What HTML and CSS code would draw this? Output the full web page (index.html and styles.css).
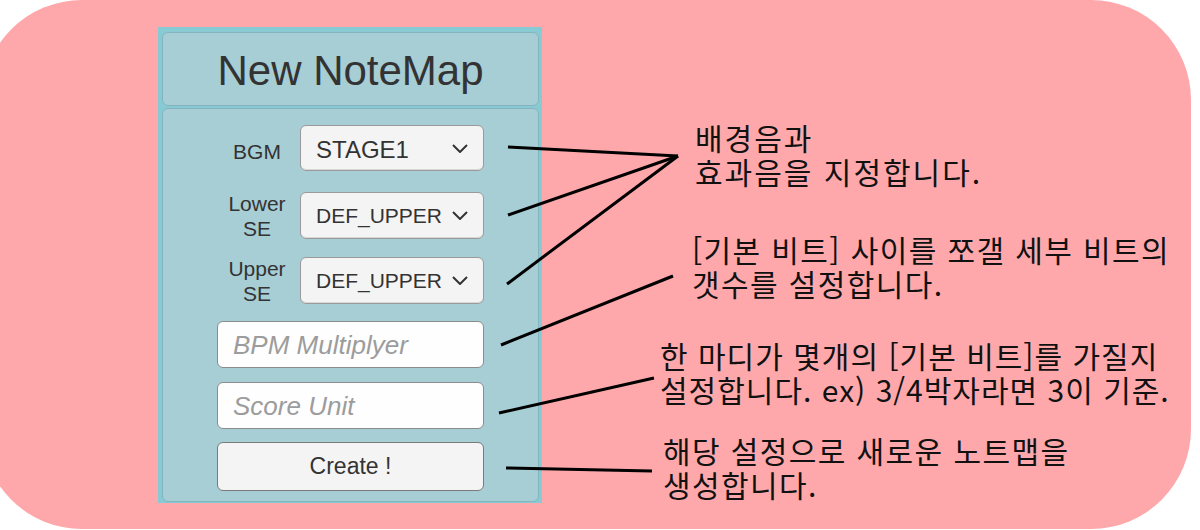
FILE: index.html
```html
<!DOCTYPE html>
<html lang="ko">
<head>
<meta charset="UTF-8" />
<title>New NoteMap</title>
<link rel="stylesheet" href="styles.css">
</head>
<body>
<div class="board">
  <div class="panel">
    <div class="head">New NoteMap</div>
    <div class="form">
      <div class="row">
        <span class="label low">BGM</span>
        <div class="select big">STAGE1<svg class="chev" width="16" height="9" viewBox="0 0 16 9"><polyline points="1,1 8,8 15,1" /></svg></div>
      </div>
      <div class="row r2">
        <span class="label">Lower<br />SE</span>
        <div class="select">DEF_UPPER<svg class="chev" width="16" height="9" viewBox="0 0 16 9"><polyline points="1,1 8,8 15,1" /></svg></div>
      </div>
      <div class="row r3">
        <span class="label">Upper<br />SE</span>
        <div class="select">DEF_UPPER<svg class="chev" width="16" height="9" viewBox="0 0 16 9"><polyline points="1,1 8,8 15,1" /></svg></div>
      </div>
      <input class="field f1" type="text" placeholder="BPM Multiplyer" />
      <input class="field f2" type="text" placeholder="Score Unit" />
      <button class="create">Create !</button>
    </div>
  </div>

  <div class="notes">
    <p class="note n1">배경음과<br />효과음을 지정합니다.</p>
    <p class="note n2">[기본 비트] 사이를 쪼갤 세부 비트의<br />갯수를 설정합니다.</p>
    <p class="note n3">한 마디가 몇개의 [기본 비트]를 가질지<br />설정합니다. ex) 3/4박자라면 3이 기준.</p>
    <p class="note n4">해당 설정으로 새로운 노트맵을<br />생성합니다.</p>
  </div>
</div>

<!-- connector lines -->
<svg class="links" width="1200" height="530" viewBox="0 0 1200 530">
  <line x1="508" y1="147" x2="678" y2="156" />
  <line x1="508" y1="215" x2="678" y2="156" />
  <line x1="507" y1="284" x2="678" y2="156" />
  <line x1="501" y1="345" x2="673" y2="276" />
  <line x1="499" y1="413" x2="654" y2="378" />
  <line x1="506" y1="468" x2="652" y2="471" />
</svg>
</body>
</html>
```

FILE: styles.css
```css
body {
  margin: 0;
  width: 1200px;
  height: 530px;
  overflow: hidden;
  position: relative;
  background: #fff;
  font-family: "Liberation Sans", Arial, sans-serif;
  color: #333;
}

.board {
  margin-left: -18px;
  width: 1209px;
  height: 529px;
  box-sizing: border-box;
  padding: 27px 0 0 176px;
  background: #fea8ab;
  border-radius: 100px;
  display: flex;
  align-items: flex-start;
}

/* the unity-like window */
.panel {
  width: 384px;
  height: 476px;
  box-sizing: border-box;
  padding: 5px 3px 1px 4px;
  background: #88cad4;
  display: flex;
  flex-direction: column;
  gap: 2px;
}

.head,
.form {
  background: #a7cdd5;
  border: 1px solid #86b4be;
  border-radius: 6px;
  box-sizing: border-box;
}

.head {
  height: 74px;
  display: flex;
  align-items: center;
  justify-content: center;
  font-size: 42px;
  padding-top: 3px;
}

.form {
  flex: 1;
  display: flex;
  flex-direction: column;
  padding: 16px 0 0 54px;
}

.row {
  display: flex;
  align-items: center;
  height: 46px;
}

.row.r2 { margin-top: 21px; height: 47px; }
.row.r3 { margin-top: 18px; height: 47px; }

.label {
  width: 80px;
  margin-right: 3px;
  text-align: center;
  font-size: 21px;
  line-height: 25px;
}

.label.low {
  padding-top: 6px;
}

.select {
  width: 184px;
  height: 100%;
  box-sizing: border-box;
  display: flex;
  align-items: center;
  padding: 0 15px 0 15px;
  background: #f4f4f4;
  border: 1px solid #9a9a9a;
  border-radius: 6px;
  box-shadow: inset 0 -1px 0 #d8d8d8;
  font-size: 21px;
}

.select.big {
  font-size: 24px;
  padding-top: 3px;
}

.chev {
  margin-left: auto;
  fill: none;
  stroke: #333;
  stroke-width: 2;
}

.select.big .chev {
  margin-top: -3px;
}

.field,
.create {
  width: 267px;
  height: 47px;
  box-sizing: border-box;
  border: 1px solid #8c8c8c;
  border-radius: 6px;
  font-family: "Liberation Sans", Arial, sans-serif;
}

.field {
  background: #fefefe;
  padding: 2px 0 0 15px;
  font-size: 26px;
  font-style: italic;
  color: #333;
}

.field::placeholder {
  color: #9c9c9c;
}

.field.f1 { margin-top: 17px; }
.field.f2 { margin-top: 14px; }

.create {
  margin-top: 13px;
  height: 49px;
  background: #f4f4f4;
  border-color: #7a7a7a;
  font-size: 23px;
  color: #333;
  padding: 0;
}

/* callout texts */
.notes {
  margin-left: 118px;
  padding-top: 93px;
  display: flex;
  flex-direction: column;
}

.note {
  margin: 0;
  white-space: nowrap;
  font-family: "Noto Sans CJK KR", sans-serif;
  font-size: 30px;
  line-height: 34px;
  letter-spacing: 1.4px;
  color: #111;
}

.n1 { padding-left: 35px; letter-spacing: 2px; }
.n2 { padding-left: 32px; margin-top: 44px; }
.n3 { margin-top: 38px; letter-spacing: 1px; }
.n4 { padding-left: 3px; margin-top: 27px; }

.links {
  position: absolute;
  left: 0;
  top: 0;
}

.links line {
  stroke: #000;
  stroke-width: 3;
}
```
